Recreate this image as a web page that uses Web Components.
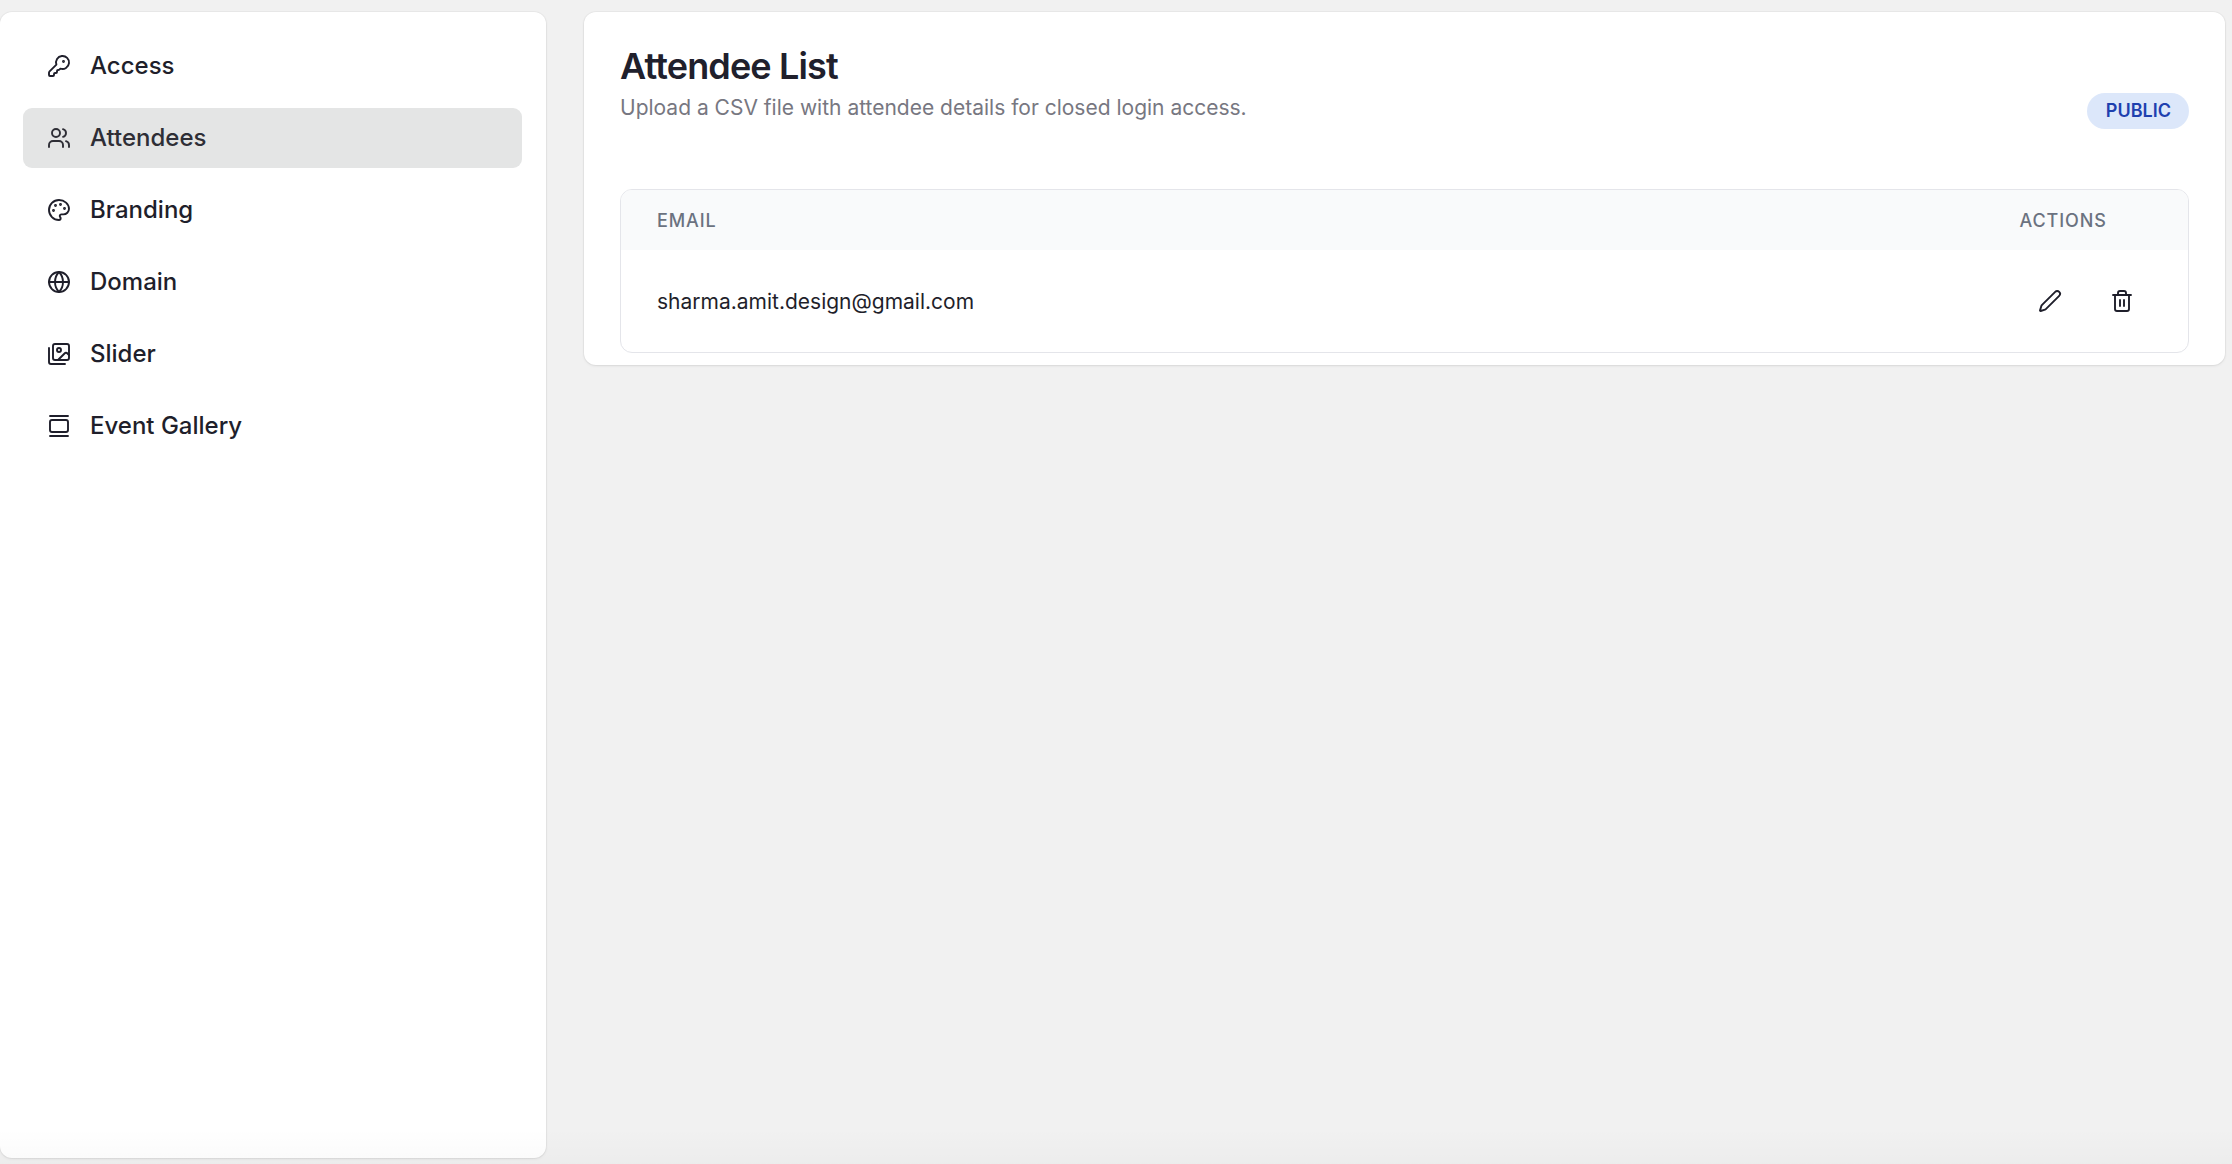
<!DOCTYPE html>
<html>
<head>
<meta charset="utf-8">
<title>Attendee List</title>
<style>
html,body{margin:0;height:100%;background:#f1f1f1;overflow:hidden;}
body{font-family:Inter,"Liberation Sans",sans-serif;color:#1f1f2b;}
</style>
</head>
<body>
<app-shell>
	<side-nav slot="side">
		<nav-item icon="key">Access</nav-item>
		<nav-item icon="users" active>Attendees</nav-item>
		<nav-item icon="palette">Branding</nav-item>
		<nav-item icon="globe">Domain</nav-item>
		<nav-item icon="images">Slider</nav-item>
		<nav-item icon="gallery">Event Gallery</nav-item>
	</side-nav>
	<page-card heading="Attendee List" sub="Upload a CSV file with attendee details for closed login access.">
		<status-badge slot="aside">PUBLIC</status-badge>
		<attendee-table>
			<attendee-row>sharma.amit.design@gmail.com</attendee-row>
		</attendee-table>
	</page-card>
</app-shell>

<script>
//lucide系のアイコン定義（24x24, stroke）
const ICONS = {
	key:`<path d="M2.586 17.414A2 2 0 0 0 2 18.828V21a1 1 0 0 0 1 1h3a1 1 0 0 0 1-1v-1a1 1 0 0 1 1-1h1a1 1 0 0 0 1-1v-1a1 1 0 0 1 1-1h.172a2 2 0 0 0 1.414-.586l.814-.814a6.5 6.5 0 1 0-4-4z"/><circle cx="16.5" cy="7.5" r=".5" fill="currentColor"/>`,
	users:`<path d="M16 21v-2a4 4 0 0 0-4-4H6a4 4 0 0 0-4 4v2"/><path d="M16 3.128a4 4 0 0 1 0 7.744"/><path d="M22 21v-2a4 4 0 0 0-3-3.87"/><circle cx="9" cy="7" r="4"/>`,
	palette:`<path d="M12 2C6.5 2 2 6.5 2 12s4.5 10 10 10c.926 0 1.648-.746 1.648-1.688 0-.437-.18-.835-.437-1.125-.29-.289-.438-.652-.438-1.125a1.64 1.64 0 0 1 1.668-1.668h1.996c3.051 0 5.555-2.503 5.555-5.554C21.965 6.012 17.461 2 12 2z"/><circle cx="13.5" cy="6.5" r=".5" fill="currentColor"/><circle cx="17.5" cy="10.5" r=".5" fill="currentColor"/><circle cx="8.5" cy="7.5" r=".5" fill="currentColor"/><circle cx="6.5" cy="12.5" r=".5" fill="currentColor"/>`,
	globe:`<circle cx="12" cy="12" r="10"/><path d="M12 2a14.5 14.5 0 0 0 0 20 14.5 14.5 0 0 0 0-20"/><path d="M2 12h20"/>`,
	images:`<path d="M18 22H4a2 2 0 0 1-2-2V6"/><path d="m22 13-1.296-1.296a2.41 2.41 0 0 0-3.408 0L11 18"/><circle cx="12" cy="8" r="2"/><rect width="16" height="16" x="6" y="2" rx="2"/>`,
	gallery:`<path d="M3 2h18"/><rect width="18" height="12" x="3" y="6" rx="2"/><path d="M3 22h18"/>`,
	pen:`<path d="M21.174 6.812a1 1 0 0 0-3.986-3.987L3.842 16.174a2 2 0 0 0-.5.83l-1.321 4.352a.5.5 0 0 0 .623.622l4.353-1.32a2 2 0 0 0 .83-.497z"/>`,
	trash:`<path d="M3 6h18"/><path d="M19 6v14c0 1-1 2-2 2H7c-1 0-2-1-2-2V6"/><path d="M8 6V4c0-1 1-2 2-2h4c1 0 2 1 2 2v2"/><path d="M10 11v6"/><path d="M14 11v6"/>`
};
const svgIcon = name=>`<svg width="24" height="24" viewBox="0 0 24 24" fill="none" stroke="currentColor" stroke-width="1.9" stroke-linecap="round" stroke-linejoin="round">${ICONS[name]}</svg>`;

//シャドウルートをつけるだけの共通クラス
class ShadowBase extends HTMLElement{
	render(html){
		this.attachShadow({mode:"open"}).innerHTML = html;
	}
}

class AppShell extends ShadowBase{ constructor(){
	super();
	this.render(`<style>
	:host{display:flex;gap:38px;height:100vh;box-sizing:border-box;padding:12px 7px 6px 0;position:relative;}
	main{flex:1;min-width:0;display:flex;flex-direction:column;align-items:stretch;}
	.fade{position:absolute;left:0;right:0;bottom:0;height:36px;pointer-events:none;
		background:linear-gradient(to bottom,rgba(0,0,0,0),rgba(0,0,0,.018));}
	</style>
	<slot name="side"></slot>
	<main><slot></slot></main>
	<div class="fade"></div>`);
}}
class SideNav extends ShadowBase{ constructor(){
	super();
	this.render(`<style>
	:host{display:flex;flex-direction:column;gap:12px;width:546px;box-sizing:border-box;flex:none;
		padding:24px 24px 24px 23px;background:#fff;border-radius:12px;
		box-shadow:0 0 0 1px rgba(0,0,0,.03),0 1px 3px rgba(0,0,0,.08);}
	</style><slot></slot>`);
}}
class NavItem extends ShadowBase{ constructor(){
	super();
	this.render(`<style>
	:host{display:flex;align-items:center;gap:19px;height:60px;padding:0 24px;border-radius:9px;
		font-size:24px;font-weight:450;color:#1f1f2b;}
	:host([active]){background:#e4e5e5;color:#2e2e36;font-weight:550;}
	span{position:relative;top:-.5px;}
	svg{flex:none;display:block;}
	</style>${svgIcon(this.getAttribute("icon"))}<span><slot></slot></span>`);
}}
class PageCard extends ShadowBase{ constructor(){
	super();
	this.render(`<style>
	:host{display:block;background:#fff;border-radius:12px;padding:36px 36px 12px;
		box-shadow:0 0 0 1px rgba(0,0,0,.03),0 1px 3px rgba(0,0,0,.08);}
	header{display:flex;justify-content:space-between;align-items:flex-end;margin-bottom:60px;}
	h1{margin:0;font-size:36px;line-height:36px;font-weight:600;letter-spacing:-.85px;color:#20202c;}
	p{margin:10px 0 7px;font-size:21px;line-height:28px;color:#777781;}
	</style>
	<header>
		<div><h1>${this.getAttribute("heading")}</h1><p>${this.getAttribute("sub")}</p></div>
		<slot name="aside"></slot>
	</header>
	<slot></slot>`);
}}
class StatusBadge extends ShadowBase{ constructor(){
	super();
	this.render(`<style>
	:host{display:block;height:36px;line-height:36px;padding:0 18px 0 19px;border-radius:18px;
		background:#dce7fa;color:#1e40af;font-size:18px;font-weight:600;}
	</style><slot></slot>`);
}}
class AttendeeTable extends ShadowBase{ constructor(){
	super();
	this.render(`<style>
	:host{display:block;border:1.5px solid #e4e5ea;border-radius:12px;overflow:hidden;}
	.head{display:flex;justify-content:space-between;align-items:center;height:60px;padding:0 36px;
		background:#f9fafb;font-size:18px;font-weight:450;letter-spacing:.9px;color:#6b7280;}
	.head span:last-child{width:132.5px;}
	</style>
	<div class="head"><span>EMAIL</span><span>ACTIONS</span></div>
	<slot></slot>`);
}}
class AttendeeRow extends ShadowBase{ constructor(){
	super();
	this.render(`<style>
	:host{display:flex;justify-content:space-between;align-items:center;height:102px;padding:0 36px;
		font-size:21px;color:#1f1f2b;}
	.actions{display:flex;gap:12px;}
	</style>
	<span><slot></slot></span>
	<div class="actions"><icon-button icon="pen"></icon-button><icon-button icon="trash"></icon-button></div>`);
}}
class IconButton extends ShadowBase{ constructor(){
	super();
	this.render(`<style>
	:host{display:flex;align-items:center;justify-content:center;width:60px;height:60px;color:#1f1f2b;}
	svg{display:block;}
	</style>${svgIcon(this.getAttribute("icon"))}`);
}}

customElements.define("app-shell",AppShell);
customElements.define("side-nav",SideNav);
customElements.define("nav-item",NavItem);
customElements.define("page-card",PageCard);
customElements.define("status-badge",StatusBadge);
customElements.define("attendee-table",AttendeeTable);
customElements.define("attendee-row",AttendeeRow);
customElements.define("icon-button",IconButton);
</script>
</body>
</html>
